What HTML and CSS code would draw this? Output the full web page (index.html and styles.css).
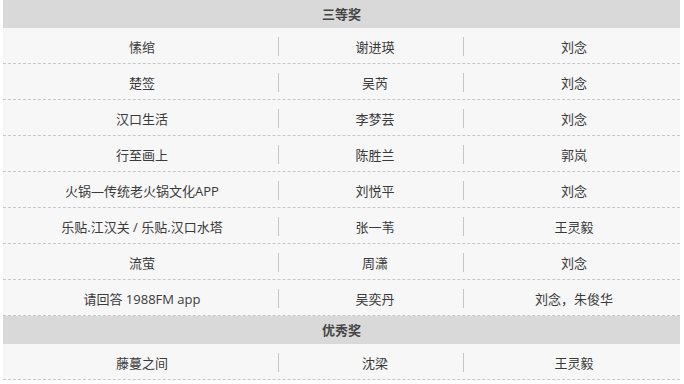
FILE: index.html
```html
<!DOCTYPE html>
<html lang="zh">
<head>
<meta charset="utf-8">
<title>获奖名单</title>
<link rel="stylesheet" href="styles.css">
</head>
<body>
<div class="awards">
  <div class="section-title">三等奖</div>
  <div class="row"><div class="cell c1">愫绾</div><span class="sep"></span><div class="cell c2">谢进瑛</div><span class="sep"></span><div class="cell c3">刘念</div></div>
  <div class="row"><div class="cell c1">楚签</div><span class="sep"></span><div class="cell c2">吴芮</div><span class="sep"></span><div class="cell c3">刘念</div></div>
  <div class="row"><div class="cell c1">汉口生活</div><span class="sep"></span><div class="cell c2">李梦芸</div><span class="sep"></span><div class="cell c3">刘念</div></div>
  <div class="row"><div class="cell c1">行至画上</div><span class="sep"></span><div class="cell c2">陈胜兰</div><span class="sep"></span><div class="cell c3">郭岚</div></div>
  <div class="row"><div class="cell c1">火锅—传统老火锅文化APP</div><span class="sep"></span><div class="cell c2">刘悦平</div><span class="sep"></span><div class="cell c3">刘念</div></div>
  <div class="row"><div class="cell c1">乐贴.江汉关 / 乐贴.汉口水塔</div><span class="sep"></span><div class="cell c2">张一苇</div><span class="sep"></span><div class="cell c3">王灵毅</div></div>
  <div class="row"><div class="cell c1">流萤</div><span class="sep"></span><div class="cell c2">周潇</div><span class="sep"></span><div class="cell c3">刘念</div></div>
  <div class="row"><div class="cell c1">请回答 1988FM app</div><span class="sep"></span><div class="cell c2">吴奕丹</div><span class="sep"></span><div class="cell c3">刘念，朱俊华</div></div>
  <div class="section-title">优秀奖</div>
  <div class="row"><div class="cell c1">藤蔓之间</div><span class="sep"></span><div class="cell c2">沈梁</div><span class="sep"></span><div class="cell c3">王灵毅</div></div>
</div>
</body>
</html>
```
FILE: styles.css
```css
html, body {
  margin: 0;
  padding: 0;
  background: #ffffff;
}

body {
  font-family: "Open Sans", "Noto Sans CJK SC", sans-serif;
  font-size: 13px;
  color: #3a3a3a;
}

.awards {
  margin: 0 4px 0 3px;
  display: flex;
  flex-direction: column;
}

.section-title {
  height: 28px;
  line-height: 28px;
  background: #d9d9d9;
  text-align: center;
  font-weight: bold;
  color: #444;
}

.row {
  display: grid;
  grid-template-columns: 275px 1px 184px 1px 1fr;
  align-items: center;
  height: 35px;
  background: #f7f7f7;
  border-bottom: 1px dashed #c8c8c8;
}

.cell {
  text-align: center;
  white-space: nowrap;
  padding-top: 2px;
}

.c1 { padding-left: 3px; }
.c2 { padding-left: 8px; }
.c3 { padding-left: 4px; }

.sep {
  width: 1px;
  height: 19px;
  margin-top: 2px;
  background: #c6c6c6;
}
```
